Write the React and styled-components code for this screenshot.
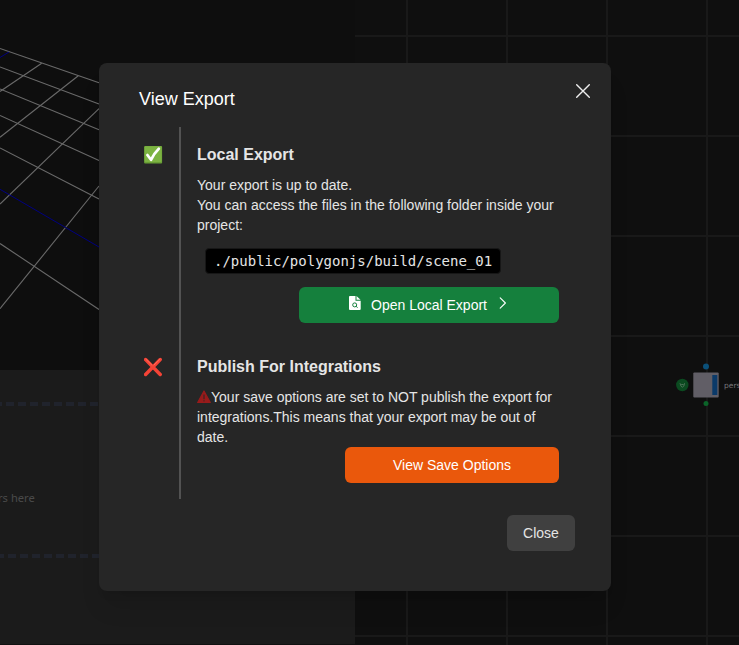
import React from "react";
import styled, { createGlobalStyle } from "styled-components";

const GlobalStyle = createGlobalStyle`
  * { box-sizing: border-box; }
  body { margin: 0; background: #0f0f0f; overflow: hidden; }
  h1, h2, p { margin: 0; }
  button { border: 0; padding: 0; font: inherit; color: inherit; cursor: pointer; }
  svg { display: block; }
`;

const Page = styled.div`
  position: relative;
  width: 739px;
  height: 645px;
  overflow: hidden;
  font: 14px/20px "Liberation Sans", Arial, sans-serif;
  color: #e5e5e5;
`;

const Workspace = styled.div`
  display: grid;
  grid-template-columns: 355px 1fr;
  height: 100%;
`;

const LeftColumn = styled.div`
  display: grid;
  grid-template-rows: 370px 1fr;
  min-width: 0;
`;

const Viewport = styled.div`
  background: #0e0e0e;
  overflow: hidden;
`;

const ParamsPanel = styled.div`
  display: flex;
  flex-direction: column;
  padding-top: 32px;
  background: #1b1b1b;
  border-bottom: 1px solid #111;
`;

const DropZone = styled.div`
  display: flex;
  flex-direction: column;
  height: 156px;
`;

const Dashes = styled.div`
  height: 4px;
  background: linear-gradient(90deg, #20232c 8px, transparent 8px) repeat-x;
  background-size: 12px 4px;
  background-position: ${(p) => p.$shift}px 0;
`;

const DropHint = styled.div`
  flex: 1;
  display: flex;
  align-items: center;
  margin-left: -2px;
  padding-top: 35px;
  font: 11.2px/16px "Noto Sans", sans-serif;
  color: #4a4a4a;
`;

const NetworkCanvas = styled.div`
  position: relative;
  background-color: #0f0f0f;
  background-image: linear-gradient(#191919 2px, transparent 2px),
    linear-gradient(90deg, #191919 2px, transparent 2px);
  background-size: 100px 100px;
  background-position: 51px 35px;
`;

const GraphNode = styled.div`
  position: absolute;
  left: 320px;
  top: 362px;
  display: flex;
  align-items: center;
  gap: 5px;
  font: 7.5px/10px "DejaVu Sans", sans-serif;
  color: #77777a;
`;

const NodeLabel = styled.span`
  padding-top: 2px;
`;

const Overlay = styled.div`
  position: absolute;
  inset: 0;
  display: flex;
  justify-content: center;
  align-items: flex-start;
  padding: 63px 29px 0 0;
`;

const Dialog = styled.section`
  display: flex;
  flex-direction: column;
  width: 512px;
  height: 528px;
  padding: 20px 36px 40px 40px;
  border-radius: 8px;
  background: #262626;
  box-shadow: 0 20px 25px -5px rgba(0, 0, 0, 0.1), 0 8px 10px -6px rgba(0, 0, 0, 0.1);
`;

const Header = styled.header`
  display: flex;
  justify-content: space-between;
  height: 44px;
`;

const Title = styled.h1`
  padding-top: 2px;
  font-size: 18px;
  line-height: 28px;
  font-weight: 400;
  color: #fff;
`;

const IconButton = styled.button`
  display: grid;
  place-items: center;
  width: 16px;
  height: 16px;
  margin-right: -16px;
  background: none;
`;

const Steps = styled.div`
  display: grid;
  grid-template-rows: 212px 160px;
`;

const Step = styled.article`
  display: grid;
  grid-template-columns: 40px 380px;
`;

const Status = styled.div`
  padding: 18px 0 0 5px;
`;

const StepBody = styled.div`
  display: flex;
  flex-direction: column;
  padding: 16px 0 0 16px;
  border-left: 2px solid #525252;
`;

const StepTitle = styled.h2`
  font-size: 16px;
  line-height: 24px;
  font-weight: 700;
  margin-bottom: 8px;
`;

const Copy = styled.p`
  width: 362px;
  white-space: nowrap;
`;

const Path = styled.code`
  align-self: flex-start;
  margin: 13px 0 13px 8px;
  padding: 2px 8px;
  border: 1px solid #171717;
  border-radius: 4px;
  background: #000;
  font: 14px/20px "DejaVu Sans Mono", monospace;
`;

const Button = styled.button`
  display: flex;
  align-items: center;
  justify-content: center;
  align-self: flex-end;
  width: ${(p) => p.$width}px;
  height: 36px;
  flex: none;
  border-radius: 6px;
  background: ${(p) => p.$bg};
  color: ${(p) => p.$fg || "#fff"};
`;

const StartIcon = styled.span`
  margin: 0 10px 4px 0;
`;

const EndIcon = styled.span`
  margin: 0 2px 4px 12px;
`;

const InlineIcon = styled.span`
  display: inline-block;
  width: 14px;
  height: 14px;
  vertical-align: -2px;
`;

const Footer = styled.footer`
  display: flex;
  justify-content: flex-end;
  padding-top: 16px;
`;

const gridLines = [
  [0, 48.5, 99, 82.7], [0, 67, 99, 104], [0, 89, 99, 129.7],
  [0, 115.5, 99, 160.5], [0, 148, 99, 199], [0, 243.5, 99, 309.5],
  [41.7, 63.3, 0, 91.5], [78.3, 75.7, 0, 137.3],
  [99, 108.7, 0, 204], [99, 186, 0, 308.7],
];

function FloorGrid() {
  return (
    <svg width="355" height="370" fill="none">
      <g stroke="#6a6a6a" strokeWidth="1.1">
        {gridLines.map(([x1, y1, x2, y2]) => (
          <line key={`${x1}-${y1}`} x1={x1} y1={y1} x2={x2} y2={y2} />
        ))}
      </g>
      <path d="M0 189.3 99 247M9 52 0 57.5" stroke="#000080" />
    </svg>
  );
}

function CameraNode() {
  return (
    <svg width="44" height="46" viewBox="0 0 44 46">
      <circle cx="7.3" cy="23" r="6.2" fill="#0b4a20" />
      <path d="M5 21.2l1 3 1.3 1 1.5-1 .8-3M6.2 22.5h2.4" fill="none" stroke="#4a7055" />
      <rect x="18.3" y="10.5" width="25.4" height="25" rx="1" fill="#615e66" />
      <rect x="37.3" y="13" width="5" height="20" fill="#0b3a69" />
      <circle cx="31" cy="4.5" r="3" fill="#0b5079" />
      <circle cx="31" cy="41.5" r="2.5" fill="#0b6429" />
    </svg>
  );
}

function CheckMark() {
  return (
    <svg width="20" height="20" viewBox="0 0 20 20">
      <rect x="0.1" y="1" width="18" height="17.5" rx="1" fill="#699f35" />
      <rect x="0.6" y="1.3" width="17" height="15.7" rx="1" fill="#7cb342" />
      <path d="M3.4 10 7 14.8Q10.2 8.2 14.8 3.7" fill="none" stroke="#fff" strokeWidth="2.7" strokeLinecap="round" strokeLinejoin="round" />
    </svg>
  );
}

function CrossMark() {
  return (
    <svg width="20" height="20" viewBox="0 0 20 20">
      <path d="M1.6 2.6 16.2 17.4M16.2 2.6 1.6 17.4" stroke="#f44336" strokeWidth="3.5" strokeLinecap="round" />
      <path d="M2 2.3 8 8.2M16 2.2 10 8" stroke="#ff6b5c" strokeWidth="1" strokeLinecap="round" />
    </svg>
  );
}

function FileSearch() {
  return (
    <svg width="12" height="15" viewBox="0 0 12 15">
      <path d="M1.2 0H6.5V4.7H11.7V13A1.1 1.1 0 0 1 10.6 14.1H1.2A1.1 1.1 0 0 1 0 13V1.1A1.1 1.1 0 0 1 1.2 0Z" fill="#fff" />
      <path d="M7.5 0 11.5 3.8H7.5Z" fill="#fff" />
      <circle cx="5.7" cy="8.9" r="2" fill="none" stroke="#15803d" />
      <path d="m7.1 10.3 1.5 1.3" stroke="#15803d" />
    </svg>
  );
}

function Warning() {
  return (
    <svg width="14" height="14" viewBox="0 0 14 14">
      <path d="M7 1 13.3 12.5H.7Z" fill="#991b1b" stroke="#991b1b" strokeWidth="1.2" strokeLinejoin="round" />
      <path d="M7 5v3.8" stroke="#262626" strokeWidth="1" strokeLinecap="round" />
      <circle cx="7" cy="10.8" r=".65" fill="#262626" />
    </svg>
  );
}

export default function App() {
  return (
    <>
      <GlobalStyle />
      <Page>
        <Workspace>
          <LeftColumn>
            <Viewport><FloorGrid /></Viewport>
            <ParamsPanel>
              <DropZone>
                <Dashes $shift={6} />
                <DropHint>rs here</DropHint>
                <Dashes $shift={8} />
              </DropZone>
            </ParamsPanel>
          </LeftColumn>
          <NetworkCanvas>
            <GraphNode><CameraNode /><NodeLabel>pers</NodeLabel></GraphNode>
          </NetworkCanvas>
        </Workspace>
        <Overlay>
          <Dialog role="dialog" aria-label="View Export">
            <Header>
              <Title>View Export</Title>
              <IconButton aria-label="Dismiss">
                <svg width="16" height="16" viewBox="0 0 16 16">
                  <path d="M1.7 1.7 14.3 14.3M14.3 1.7 1.7 14.3" stroke="#eee" strokeWidth="1.4" strokeLinecap="round" />
                </svg>
              </IconButton>
            </Header>
            <Steps>
              <Step>
                <Status><CheckMark /></Status>
                <StepBody>
                  <StepTitle>Local Export</StepTitle>
                  <Copy>
                    Your export is up to date.<br />
                    You can access the files in the following folder inside your<br />
                    project:
                  </Copy>
                  <Path>./public/polygonjs/build/scene_01</Path>
                  <Button $width={260} $bg="#15803d">
                    <StartIcon><FileSearch /></StartIcon>
                    Open Local Export
                    <EndIcon>
                      <svg width="8" height="12" viewBox="0 0 8 12">
                        <path d="m1.2.8 5.2 5.2-5.2 5.2" fill="none" stroke="#fff" strokeWidth="1.1" strokeLinecap="round" strokeLinejoin="round" />
                      </svg>
                    </EndIcon>
                  </Button>
                </StepBody>
              </Step>
              <Step>
                <Status><CrossMark /></Status>
                <StepBody>
                  <StepTitle>Publish For Integrations</StepTitle>
                  <Copy>
                    <InlineIcon><Warning /></InlineIcon>Your save options are set to NOT publish the export for<br />
                    integrations.This means that your export may be out of<br />
                    date.
                  </Copy>
                  <Button $width={214} $bg="#ea580c">View Save Options</Button>
                </StepBody>
              </Step>
            </Steps>
            <Footer>
              <Button $width={68} $bg="#404040" $fg="#e5e5e5">Close</Button>
            </Footer>
          </Dialog>
        </Overlay>
      </Page>
    </>
  );
}
